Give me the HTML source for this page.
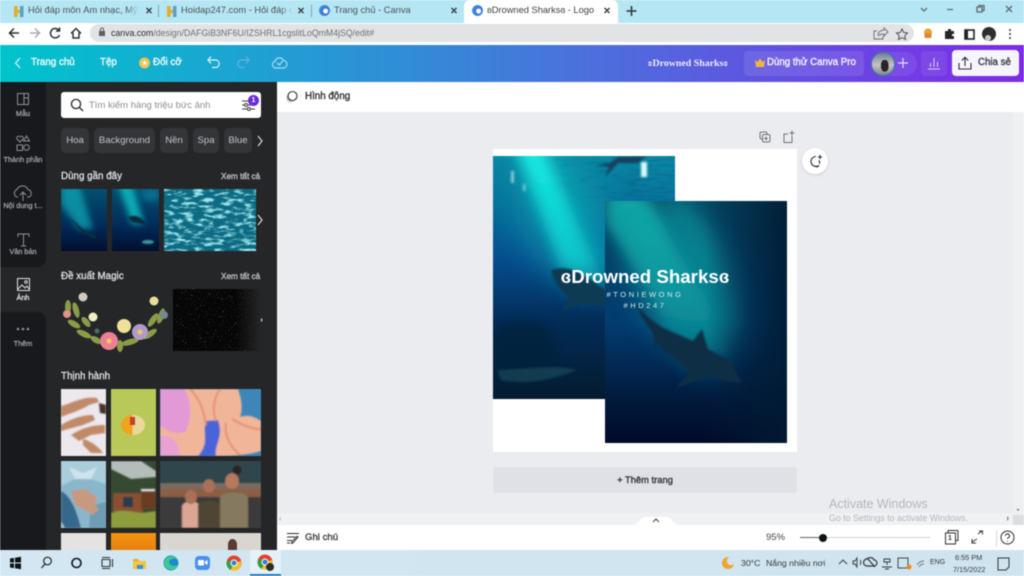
<!DOCTYPE html>
<html><head><meta charset="utf-8"><style>
*{box-sizing:border-box;margin:0;padding:0}
html,body{width:1024px;height:576px;overflow:hidden;background:#fff;font-family:"Liberation Sans","Noto Sans CJK SC",sans-serif}
#r{position:relative;width:1024px;height:576px;overflow:hidden;filter:blur(.4px)}
.a{position:absolute}
.t{position:absolute;white-space:nowrap;line-height:1}
.s{-webkit-text-stroke:.4px currentColor}
svg{position:absolute;overflow:visible}
svg.c{overflow:hidden}
.chip{position:absolute;top:128px;height:25px;background:#333538;border-radius:5px;color:#c4c5c7;font-size:9.600px;line-height:25px;text-align:center}
.rl{position:absolute;left:0;width:46px;text-align:center;font-size:7.300px;color:#a3a4a6;white-space:nowrap;-webkit-text-stroke:.25px currentColor}
</style></head><body><div id="r">
<!-- tab bar -->
<div class="a" style="left:0;top:0;width:1024px;height:23px;background:#b5e6f3"></div>
<div class="a" style="left:464px;top:0;width:154px;height:23px;background:#fff;border-radius:6px 6px 0 0"></div>
<div class="a" style="left:158px;top:5px;width:1px;height:12px;background:#7fa5b0"></div>
<div class="a" style="left:311px;top:5px;width:1px;height:12px;background:#7fa5b0"></div>
<svg style="left:14px;top:6px" width="10" height="11"><path d="M0 0h3.500v4H6v3H3.500v4H0z" fill="#e2ad2c"/><path d="M6 0h3.500v11H6z" fill="#5a9fc4"/></svg>
<svg style="left:167px;top:6px" width="10" height="11"><path d="M0 0h3.500v4H6v3H3.500v4H0z" fill="#e2ad2c"/><path d="M6 0h3.500v11H6z" fill="#5a9fc4"/></svg>
<div class="t" style="left:28px;top:6px;width:111px;overflow:hidden;font-size:9.300px;color:#4b5257">Hỏi đáp môn Âm nhạc, Mỹ thuật</div>
<div class="a" style="left:126px;top:0;width:14px;height:22px;background:linear-gradient(90deg,rgba(181,230,243,0),#b5e6f3 95%)"></div>
<div class="t" style="left:181px;top:6px;width:112px;overflow:hidden;font-size:9.300px;color:#4b5257">Hoidap247.com - Hỏi đáp online</div>
<div class="a" style="left:280px;top:0;width:14px;height:22px;background:linear-gradient(90deg,rgba(181,230,243,0),#b5e6f3 95%)"></div>
<div class="t" style="left:334px;top:6px;font-size:9.300px;color:#4b5257">Trang chủ - Canva</div>
<div class="t" style="left:487px;top:6px;font-size:9.300px;color:#3c4043">ʚDrowned Sharksɞ - Logo</div>
<div class="a" style="left:319px;top:5px;width:11px;height:11px;border-radius:50%;background:radial-gradient(circle at 60% 55%,#fff 0 2px,#3b6fe0 3px,#38b6d8)"></div>
<div class="a" style="left:472px;top:5px;width:11px;height:11px;border-radius:50%;background:radial-gradient(circle at 60% 55%,#fff 0 2px,#3b6fe0 3px,#38b6d8)"></div>
<svg style="left:0;top:0" width="1024" height="23" fill="none" stroke="#2c3034" stroke-width="1.300">
<path d="M146.500 8l5 5m0-5l-5 5M298.500 8l5 5m0-5l-5 5M451.500 8l5 5m0-5l-5 5M604.500 8l5 5m0-5l-5 5"/>
<path d="M631.500 6v10M626.500 11h10" stroke-width="1.500"/>
<path d="M921 8l3 3 3-3M947 9.500h6M977 7h5v5h-5zM979 7V5.500h5v5h-2" stroke="#5d6a70"/><path d="M1006 6l6 6m0-6l-6 6" stroke="#5d6a70"/>
</svg>
<!-- address bar -->
<div class="a" style="left:90px;top:24px;width:824px;height:18px;background:#e1e3e5;border-radius:9px"></div>
<svg style="left:0;top:23px" width="120" height="22" fill="none" stroke-width="1.500">
<path d="M19 10H10M14 5.500L9.500 10l4.500 4.500" stroke="#2c3034"/>
<path d="M30 10h9M35 5.500l4.500 4.500L35 14.500" stroke="#a7abae"/>
<path d="M59 7.500A4.700 4.700 0 1 0 59.500 12M59.500 4.500v3.500H56" stroke="#2c3034"/>
<path d="M71 10.500l5-5 5 5M73 9.500v5.500h6V9.500" stroke="#2c3034"/>
<rect x="99" y="8" width="6" height="5" fill="#5c6064" stroke="none"/><path d="M100.500 8V6.500a1.500 1.500 0 0 1 3 0V8" stroke="#5c6064" stroke-width="1"/>
</svg>
<div class="t" style="left:111px;top:29px;font-size:8.750px;color:#6e7276"><span style="color:#26292c">canva.com</span>/design/DAFGiB3NF6U/IZSHRL1cgslitLoQmM4jSQ/edit#</div>
<svg style="left:870px;top:23px" width="154" height="22" fill="none" stroke="#6b6f73" stroke-width=".9">
<path d="M7 8H4v8h9v-3M8 12c0-3 3-5 6-5V5l4 4-4 4v-2c-2 0-4 0-6 2"/>
<path d="M32 6l1.700 3.500 3.800.5-2.700 2.600.7 3.800L32 14.600l-3.500 1.800.7-3.800-2.700-2.600 3.800-.5z" stroke="#444"/>
<circle cx="58" cy="9.500" r="4" fill="#e9a13b" stroke="none"/><rect x="54.500" y="10.500" width="7" height="4.500" rx="1" fill="#d8892c" stroke="none"/>
<path d="M75 8h3v-2h3v2h3v3h-2v2h2v3H75z" fill="#24272a" stroke="none"/>
<rect x="95" y="7" width="9" height="9" fill="#fff" stroke="#1f2225" stroke-width="1.600"/><rect x="95" y="7" width="3" height="9" fill="#1f2225" stroke="none"/>
<circle cx="119" cy="11" r="7" fill="#2c2d2f" stroke="none"/><circle cx="118" cy="15" r="3" fill="#c9c9c9" stroke="none"/>
<circle cx="140" cy="7" r="1" fill="#333" stroke="none"/><circle cx="140" cy="11" r="1" fill="#333" stroke="none"/><circle cx="140" cy="15" r="1" fill="#333" stroke="none"/>
</svg>
<!-- header -->
<div class="a" style="left:0;top:45px;width:1024px;height:37px;background:linear-gradient(90deg,#00c4cc 0%,#2f8fd6 38%,#4d6fdc 58%,#7d2ae8 100%)"></div>
<svg style="left:0;top:45px" width="300" height="37" fill="none" stroke="#dff6f8" stroke-width="1.200">
<path d="M20 13l-4.500 5 4.500 5"/>
<circle cx="144.500" cy="18" r="5.500" fill="#f2c14e" stroke="none"/><path d="M144.500 15l.9 2 2.100.2-1.600 1.400.5 2-1.900-1.100-1.900 1.100.5-2-1.600-1.400 2.100-.2z" fill="#fff" stroke="none"/>
<path d="M208 15h8a3.800 3.800 0 0 1 0 7.500h-4M211 11.500L208 15l3 3.500"/>
<path d="M249 15h-8a3.800 3.800 0 0 0 0 7.500h4M246 11.500l3 3.500-3 3.500" stroke="#5fb4dc"/>
<path d="M277 23h-1.500a3.300 3.300 0 0 1-.5-6.500 4.500 4.500 0 0 1 8.500-1 3.800 3.800 0 0 1 .5 7.500z" stroke="#a9dcef"/><path d="M277 18l2.500 2 3-4" stroke="#a9dcef"/>
</svg>
<div class="t s" style="left:31px;top:58px;font-size:9.800px;color:#eafafb">Trang chủ</div>
<div class="t s" style="left:100px;top:58px;font-size:9.800px;color:#eafafb">Tệp</div>
<div class="t s" style="left:153px;top:58px;font-size:9.800px;color:#eafafb">Đổi cỡ</div>
<div class="t" style="left:648px;top:59px;font-size:9.900px;font-weight:bold;color:#f0ecfb;font-family:'Liberation Serif',serif">ʚDrowned Sharksɞ</div>
<div class="a" style="left:744px;top:51px;width:120px;height:25px;border-radius:4px;background:rgba(255,255,255,.1)"></div>
<svg style="left:754px;top:58px" width="12" height="10"><path d="M1 2l2.500 2L6 .5 8.500 4 11 2l-1 7H2z" fill="#f3b63c"/></svg>
<div class="t s" style="left:767px;top:58px;font-size:9.700px;color:#f2eefc">Dùng thử Canva Pro</div>
<div class="a" style="left:871px;top:52px;width:46px;height:24px;border-radius:12px;background:rgba(255,255,255,.08)"></div>
<div class="a" style="left:871px;top:52px;width:24px;height:24px;border-radius:50%;border:1.500px solid #3a7e98;background:radial-gradient(ellipse 4px 6px at 58% 58%,#2a2327 0 99%,transparent),linear-gradient(#6f8190,#c8c3c6 55%,#7d8893)"></div>
<svg style="left:897px;top:57px" width="12" height="12" stroke="#e6e0f9" stroke-width="1.200"><path d="M6 1v10M1 6h10"/></svg>
<div class="a" style="left:921px;top:51px;width:26px;height:25px;border-radius:4px;background:rgba(255,255,255,.08)"></div>
<svg style="left:927px;top:56px" width="14" height="14" fill="none" stroke="#dcd4f7"><path d="M1 13h12M3.500 11V7M7 11V2M10.500 11V6"/></svg>
<div class="a" style="left:952px;top:50px;width:67px;height:26px;border-radius:4px;background:#f6f4fd"></div>
<svg style="left:958px;top:56px" width="14" height="14" fill="none" stroke="#2d2f33" stroke-width="1.100"><path d="M1 7v6h12V7M7 10V1.500M3.800 4.500L7 1.300l3.200 3.200"/></svg>
<div class="t s" style="left:978px;top:58px;font-size:9.700px;color:#3c3f44">Chia sẻ</div>
<!-- rail + panel -->
<div class="a" style="left:0;top:82px;width:46px;height:468px;background:#17191c"></div>
<div class="a" style="left:46px;top:82px;width:231px;height:468px;background:#252627"></div>
<div class="a" style="left:0;top:267px;width:46px;height:45px;background:#252627"></div>
<div class="a" style="left:38px;top:259px;width:8px;height:8px;background:#252627"></div><div class="a" style="left:38px;top:259px;width:8px;height:8px;background:#17191c;border-radius:0 0 8px 0"></div>
<div class="a" style="left:38px;top:312px;width:8px;height:8px;background:#252627"></div><div class="a" style="left:38px;top:312px;width:8px;height:8px;background:#17191c;border-radius:0 8px 0 0"></div>
<svg style="left:0;top:85px" width="46" height="270" fill="none" stroke="#8e9092" stroke-width="1">
<path d="M17.500 8.500h11v11h-11zM24 8.500v11M24 13h4.500"/>
<path d="M20 57l-3-3a1.800 1.800 0 0 1 3-2 1.800 1.800 0 0 1 3 2zM26.500 51l3 5h-6zM17 60h5.500v5.500H17z"/><circle cx="26.500" cy="62.500" r="2.800"/>
<path d="M18 112h-1a4 4 0 0 1 0-7.500 6 6 0 0 1 11 0 4 4 0 0 1 1 7.500h-2M23 116v-9M20 110l3-3 3 3"/>
<path d="M18 152v-3h11v3M23.500 149v12M21 161h5"/>
<path d="M17.500 193.500h12v12h-12zM18 204l4-4 3 3 2-2 2 3" stroke="#e2e3e4"/><circle cx="26" cy="197" r="1.300" stroke="#e2e3e4"/>
<circle cx="18" cy="244" r=".8" fill="#8e9092"/><circle cx="23" cy="244" r=".8" fill="#8e9092"/><circle cx="28" cy="244" r=".8" fill="#8e9092"/>
</svg>
<div class="rl" style="top:109px">Mẫu</div>
<div class="rl" style="top:155px">Thành phần</div>
<div class="rl" style="top:201px">Nội dung t...</div>
<div class="rl" style="top:247px">Văn bản</div>
<div class="rl" style="top:293px;color:#e6e6e6">Ảnh</div>
<div class="rl" style="top:339px">Thêm</div>
<!-- search -->
<div class="a" style="left:61px;top:92px;width:200px;height:26px;background:#fff;border-radius:3px"></div>
<svg style="left:70px;top:98px" width="14" height="14" fill="none" stroke="#26282b" stroke-width="1.300"><circle cx="6" cy="6" r="4.600"/><path d="M9.500 9.500L13 13"/></svg>
<div class="t" style="left:89px;top:100.500px;font-size:9.500px;color:#8b8d91">Tìm kiếm hàng triệu bức ảnh</div>
<svg style="left:241px;top:98px" width="14" height="14" fill="none" stroke="#3a3c40"><path d="M1 3h13M1 7h13M1 11h13"/><circle cx="5" cy="7" r="1.500" fill="#fff"/><circle cx="10" cy="3" r="1.500" fill="#fff"/><circle cx="8" cy="11" r="1.500" fill="#fff"/></svg>
<div class="a" style="left:248px;top:95px;width:11px;height:11px;border-radius:50%;background:#6b2bd9;color:#fff;font-size:7px;font-weight:bold;text-align:center;line-height:11px">1</div>
<!-- chips -->
<div class="chip" style="left:61px;width:28px">Hoa</div>
<div class="chip" style="left:94px;width:61px">Background</div>
<div class="chip" style="left:160px;width:28px">Nền</div>
<div class="chip" style="left:193px;width:26px">Spa</div>
<div class="chip" style="left:224px;width:28px">Blue</div>
<svg style="left:0;top:0" width="280" height="340" fill="none" stroke="#d7d8d9" stroke-width="1.200"><path d="M258 136l4 5-4 5M258 215l4 5-4 5M258 315l4 5-4 5"/></svg>
<div class="t s" style="left:61px;top:171.500px;font-size:9.800px;color:#d6d7d8">Dùng gần đây</div>
<div class="t s" style="left:221px;top:173px;font-size:8.200px;color:#b8b9bb">Xem tất cả</div>
<div class="t s" style="left:61px;top:271.500px;font-size:9.800px;color:#d6d7d8">Đề xuất Magic</div>
<div class="t s" style="left:221px;top:273px;font-size:8.200px;color:#b8b9bb">Xem tất cả</div>
<div class="t s" style="left:61px;top:371.500px;font-size:9.800px;color:#d6d7d8">Thịnh hành</div>
<!-- recent thumbs -->
<svg class="c" style="left:61px;top:189px" width="46" height="62"><defs><filter id="b3" x="-50%" y="-50%" width="200%" height="200%"><feGaussianBlur stdDeviation="3.500"/></filter><linearGradient id="tg" x1="0" y1="0" x2="0" y2="1"><stop offset="0" stop-color="#045070"/><stop offset=".6" stop-color="#032a58"/><stop offset="1" stop-color="#010f2e"/></linearGradient><filter id="b4" x="-30%" y="-30%" width="160%" height="160%"><feGaussianBlur stdDeviation=".7"/></filter></defs><rect width="46" height="62" fill="url(#tg)"/><path d="M0 -5h18l14 45H18L0 15z" fill="#0aa0b0" opacity=".8" filter="url(#b3)"/><path d="M8 28l16 14 12 5-2 3-12-6z" fill="#0b2a3f" filter="url(#b4)"/></svg>
<svg class="c" style="left:112px;top:189px" width="47" height="62"><rect width="47" height="62" fill="url(#tg)"/><path d="M6 -5h14l12 40H20z" fill="#0cc0c6" opacity=".85" filter="url(#b3)"/><path d="M28 0h19v12H32z" fill="#0a7fa0" opacity=".7" filter="url(#b3)"/><path d="M16 28c8-3 14 0 19 8l-6-1-9-2z" fill="#0c2c3f" filter="url(#b4)"/><ellipse cx="36" cy="53" rx="6" ry="2" fill="#3d9aa0" filter="url(#b4)"/></svg>
<svg class="c" style="left:164px;top:189px" width="92" height="62"><defs><filter id="w" x="0" y="0" width="100%" height="100%" color-interpolation-filters="sRGB"><feTurbulence type="fractalNoise" baseFrequency=".1 .3" numOctaves="3" seed="4"/><feColorMatrix values="0 0 0 0 .62  0 0 0 0 .9  0 0 0 0 .93  4 0 0 0 -1.900"/></filter></defs><rect width="92" height="62" fill="#0c6a82"/><rect width="92" height="62" filter="url(#w)"/></svg>
<!-- magic -->
<svg style="left:60px;top:290px" width="112" height="62">
<g fill="#8b9b48"><ellipse cx="8" cy="17" rx="3" ry="7"/><ellipse cx="16" cy="20" rx="3" ry="8" transform="rotate(-15 16 20)"/><ellipse cx="14" cy="34" rx="7" ry="3" transform="rotate(30 14 34)"/><ellipse cx="24" cy="44" rx="8" ry="3" transform="rotate(25 24 44)"/><ellipse cx="36" cy="50" rx="6" ry="3" transform="rotate(30 36 50)"/><ellipse cx="26" cy="32" rx="6" ry="3" transform="rotate(50 26 32)"/><ellipse cx="101" cy="26" rx="3" ry="8" transform="rotate(20 101 26)"/><ellipse cx="93" cy="30" rx="3" ry="8" transform="rotate(35 93 30)"/><ellipse cx="90" cy="44" rx="8" ry="3" transform="rotate(-35 90 44)"/><ellipse cx="70" cy="52" rx="9" ry="3" transform="rotate(-15 70 52)"/><ellipse cx="60" cy="56" rx="3" ry="6"/></g>
<circle cx="23" cy="7" r="4.500" fill="#cfcabb"/><circle cx="7" cy="24" r="4" fill="#dd9385"/><circle cx="33" cy="27" r="4.500" fill="#f2eec4"/><circle cx="94" cy="11" r="4.500" fill="#e8df98"/><circle cx="104" cy="25" r="4" fill="#74888f"/><circle cx="64" cy="36" r="7" fill="#eee19a"/><circle cx="80" cy="42" r="8" fill="#b09acb"/><circle cx="49" cy="51" r="9" fill="#ec7e96"/><circle cx="49" cy="51" r="2.500" fill="#f4c95a"/><circle cx="80" cy="42" r="2.500" fill="#e7cc57"/><circle cx="37" cy="41" r="2.500" fill="#4e6a6a"/>
</svg>
<svg class="c" style="left:173px;top:289px" width="88" height="62"><defs><filter id="st" x="0" y="0" width="100%" height="100%" color-interpolation-filters="sRGB"><feTurbulence type="fractalNoise" baseFrequency=".8" numOctaves="1" seed="7"/><feColorMatrix values="0 0 0 0 .8  0 0 0 0 .8  0 0 0 0 .8  9 0 0 0 -6"/></filter><linearGradient id="fd"><stop offset=".72" stop-color="#252627" stop-opacity="0"/><stop offset="1" stop-color="#252627"/></linearGradient></defs><rect width="88" height="62" fill="#060606"/><rect width="88" height="62" filter="url(#st)" opacity=".6"/><rect width="88" height="62" fill="url(#fd)"/></svg>
<!-- trending -->
<svg class="c" style="left:61px;top:389px" width="45" height="67"><rect width="45" height="67" fill="#ece8ee"/><g fill="#c08a68" filter="url(#b4)"><path d="M0 17c12-3 22-10 36-8l2 4-10 3c-10 6-18 8-28 12z"/><path d="M0 36c10-6 20-10 32-10l2 5-12 5-22 6z"/><path d="M10 46c8-5 18-10 34-10v8l-14 2-12 6z"/><path d="M22 50c8 2 16 8 20 14H30l-8-8z"/><path d="M38 14l7 2v9l-6-1z" fill="#44302a"/></g></svg>
<div class="a" style="left:111px;top:389px;width:45px;height:67px;background:#b9c959"></div>
<div class="a" style="left:121px;top:415px;width:24px;height:20px;border-radius:50%;background:linear-gradient(90deg,#f0a31f 45%,#e8d89a 50%)"></div>
<div class="a" style="left:130px;top:417px;width:5px;height:8px;background:#c73f2a"></div>
<svg class="c" style="left:160px;top:389px" width="101" height="67"><rect width="101" height="67" fill="#3e86b8"/><g filter="url(#b4)"><path d="M0 0h78c5 14 4 22 2 28 8-3 15 0 21 4v30c-20 6-40 5-70 5H0z" fill="#f1b69a"/><path d="M0 0h24c8 12 8 28 2 42-8 5-20 0-26-6z" fill="#e29ad6"/><path d="M0 48c10-4 18 2 20 19H0z" fill="#e9a2cf"/><path d="M46 32c-4 12 4 22-8 35h18c-2-12 8-18 2-36z" fill="#4a63d8"/><path d="M30 0c10 10 14 22 16 36M60 0c-6 8-8 22-4 32M72 30c10 6 20 10 29 10M66 34c-2 12 4 24 14 32" stroke="#e7906f" fill="none" stroke-width="2"/></g></svg>
<svg class="c" style="left:61px;top:461px" width="45" height="67"><rect width="45" height="67" fill="#a9cddb"/><g filter="url(#b4)"><path d="M0 25l20-10 25 8v44H10z" fill="#8ab6cc"/><path d="M0 30c8 4 14 14 20 37H4L0 60z" fill="#35688a"/><path d="M30 45l15-4v26H28z" fill="#6d9cb5"/><path d="M10 30l14-2 12 8-2 8 4 4-6 6-18-10z" fill="#c79a80"/><path d="M8 6l14 6 14-6-6 12H14z" fill="#cfe3ec"/></g></svg>
<svg class="c" style="left:111px;top:461px" width="45" height="67"><rect width="45" height="67" fill="#354a30"/><g filter="url(#b4)"><path d="M0 0h30L45 10v6L20 18 0 8z" fill="#b4bdb9"/><rect x="2" y="32" width="30" height="20" fill="#8a4f32"/><rect x="12" y="36" width="10" height="10" fill="#2a3a48"/><path d="M30 30h15v18H30z" fill="#6a3e22"/><path d="M0 52c10-4 20-2 30 0l15-2v17H0z" fill="#8d9c3e"/><path d="M30 28h14v2H30z" fill="#eee"/></g></svg>
<svg class="c" style="left:160px;top:461px" width="101" height="67"><rect width="101" height="67" fill="#2f464c"/><g filter="url(#b4)"><rect y="22" width="101" height="8" fill="#7d6a5e"/><rect y="28" width="101" height="10" fill="#8a5f45"/><rect y="36" width="101" height="31" fill="#3b3a3a"/><path d="M22 67V45c2-6 16-6 18 0v22z" fill="#dba693"/><path d="M38 67V44c2-6 20-6 22 0v23z" fill="#4f4436"/><path d="M60 67V36c4-6 24-6 28 0v31z" fill="#85795f"/><ellipse cx="31" cy="36" rx="6" ry="7" fill="#a96f55"/><ellipse cx="49" cy="25" rx="6" ry="7" fill="#a96f55"/><ellipse cx="72" cy="20" rx="7" ry="8" fill="#b5795c"/><circle cx="77" cy="9" r="4.500" fill="#2b2322"/></g></svg>
<div class="a" style="left:61px;top:533px;width:45px;height:17px;background:#e4e3e2"></div>
<div class="a" style="left:111px;top:533px;width:45px;height:17px;background:linear-gradient(#f4940f,#e97f12)"></div>
<div class="a" style="left:160px;top:533px;width:101px;height:17px;background:#d9d6d2"></div>
<div class="a" style="left:228px;top:539px;width:9px;height:11px;background:#5a3a35;border-radius:50% 50% 0 0"></div>
<!-- panel collapse -->
<svg style="left:276px;top:290px" width="10" height="56"><path d="M0 0c0 8 8 8 8 14v28c0 6-8 6-8 14z" fill="#252627"/><path d="M4.500 25.500l-2 2.500 2 2.500" stroke="#ccc" fill="none"/></svg>
<!-- top toolbar -->
<div class="a" style="left:277px;top:82px;width:747px;height:30px;background:#fff"></div>
<svg style="left:285px;top:89px" width="16" height="16" fill="none"><circle cx="5.500" cy="9" r="4.200" fill="#bdbec0"/><circle cx="7.500" cy="7" r="4.500" fill="#fff" stroke="#2f3134" stroke-width="1.100"/></svg>
<div class="t s" style="left:305px;top:92px;font-size:9.800px;color:#36383b">Hình động</div>
<!-- canvas -->
<div class="a" style="left:277px;top:112px;width:747px;height:401px;background:#ebecf0"></div>
<svg style="left:758px;top:130px" width="36" height="14" fill="none" stroke="#6f7277"><rect x="2" y="2" width="7" height="7" rx="1.500"/><rect x="4.500" y="4.500" width="7.500" height="7.500" rx="1.500" fill="#ebecf0"/><path d="M8 6.500v4M6 8.500h4"/><path d="M34 6v6.500h-8V4H30M34 .5v5M31.500 3H36.500"/></svg>
<div class="a" style="left:493px;top:149px;width:304px;height:303px;background:#fff"></div>
<div class="a" style="left:802px;top:148px;width:26px;height:26px;border-radius:50%;background:#fff;box-shadow:0 1px 3px rgba(0,0,0,.12)"></div>
<svg style="left:808px;top:154px" width="15" height="15" fill="none" stroke="#27292c" stroke-width="1.100"><path d="M8 2.500a5 5 0 1 0 3 9l-2 1.500-2-1"/><path d="M11 6.200a5 5 0 0 1 .5 3.500M12 1v4M10 3h4"/></svg>
<!-- design img 1 -->
<svg class="c" style="left:493px;top:156px" width="182" height="243"><defs>
<linearGradient id="b1" x1="0" y1="0" x2="0" y2="1"><stop offset="0" stop-color="#0a88a4"/><stop offset=".2" stop-color="#07709a"/><stop offset=".42" stop-color="#064e8e"/><stop offset=".68" stop-color="#032c58"/><stop offset="1" stop-color="#031b2e"/></linearGradient>
<linearGradient id="r1" gradientUnits="userSpaceOnUse" x1="0" y1="0" x2="0" y2="150"><stop offset="0" stop-color="#14eae2"/><stop offset=".7" stop-color="#0cc6ca" stop-opacity=".95"/><stop offset="1" stop-color="#0c8a9a" stop-opacity="0"/></linearGradient>
<filter id="bl" x="-40%" y="-40%" width="180%" height="180%"><feGaussianBlur stdDeviation="7"/></filter><filter id="bl2" x="-30%" y="-30%" width="160%" height="160%"><feGaussianBlur stdDeviation="1"/></filter><filter id="bl3" x="-30%" y="-30%" width="160%" height="160%"><feGaussianBlur stdDeviation="4"/></filter><filter id="bl5" x="-50%" y="-50%" width="200%" height="200%"><feGaussianBlur stdDeviation="14"/></filter>
<filter id="rp" x="0" y="0" width="100%" height="100%" color-interpolation-filters="sRGB"><feTurbulence type="fractalNoise" baseFrequency=".06 .35" numOctaves="2" seed="3"/><feColorMatrix values="0 0 0 0 .05  0 0 0 0 .22  0 0 0 0 .32  2 0 0 0 -.9"/></filter></defs>
<rect width="182" height="243" fill="url(#b1)"/>
<rect x="60" y="0" width="122" height="46" filter="url(#rp)" opacity=".3"/>
<ellipse cx="72" cy="62" rx="48" ry="72" transform="rotate(-25 72 62)" fill="#0aa0b0" opacity=".5" filter="url(#bl5)"/>
<g filter="url(#bl)"><path d="M20 -15h28l74 165H82z" fill="url(#r1)"/><path d="M58 -10h14l56 135h-16z" fill="#0fb4b8" opacity=".3"/></g>
<path d="M104 9l13-2 8-6h28l-8 6h-20l-13 14 4-10z" fill="#12405c" filter="url(#bl2)"/>
<g fill="#d8fbfb" filter="url(#bl2)"><rect x="148" y="6" width="6" height="15"/><rect x="18" y="15" width="3" height="12" opacity=".6"/><rect x="30" y="28" width="2.500" height="7" opacity=".5"/></g>
<path d="M58 114c14-4 24-1 40 10l14 10v17l-22-4-22 8 8-12c-8-8-16-18-18-29z" fill="#0f3a52" filter="url(#bl2)"/>
<ellipse cx="28" cy="190" rx="34" ry="26" fill="#04243a" filter="url(#bl3)" opacity=".7"/><path d="M4 214c30-1 58-6 80 0-20 8-46 16-76 10z" fill="#1e505f" opacity=".6" filter="url(#bl2)"/>
</svg>
<!-- design img 2 -->
<svg class="c" style="left:605px;top:201px" width="182" height="242"><defs>
<linearGradient id="b2" x1="0" y1="0" x2="0" y2="1"><stop offset="0" stop-color="#054460"/><stop offset=".5" stop-color="#033c70"/><stop offset=".8" stop-color="#021c40"/><stop offset="1" stop-color="#010a28"/></linearGradient>
<linearGradient id="s2" x1="0" y1="0" x2="1" y2="0"><stop offset=".55" stop-color="#011b33" stop-opacity="0"/><stop offset="1" stop-color="#011b33" stop-opacity=".9"/></linearGradient>
<linearGradient id="r2" gradientUnits="userSpaceOnUse" x1="0" y1="0" x2="0" y2="190"><stop offset="0" stop-color="#14b4b0"/><stop offset=".55" stop-color="#0a9aa0" stop-opacity=".9"/><stop offset="1" stop-color="#0a7080" stop-opacity="0"/></linearGradient></defs>
<rect width="182" height="242" fill="url(#b2)"/>
<ellipse cx="80" cy="78" rx="50" ry="85" transform="rotate(-25 80 78)" fill="#0c9aa0" opacity=".6" filter="url(#bl5)"/>
<g filter="url(#bl)"><path d="M0 -10h38l70 120 25 80H90L45 90 0 22z" fill="url(#r2)" opacity=".85"/><path d="M60 -5h25l50 130h-25z" fill="#0d9aa0" opacity=".3"/></g>
<rect width="182" height="242" fill="url(#s2)"/>
<path d="M30 103L45 118 58 127 72 133 88 140 97 128 103 148 125 160 137 182 120 180 104 176 85 182 70 187 84 172 70 158 58 150 53 142 50 150 48 133 38 118z" fill="#0e2f45" filter="url(#bl2)"/>
</svg>
<div class="t" style="left:493px;width:304px;text-align:center;top:267.500px;font-size:18.700px;font-weight:bold;color:#fff">ɞDrowned Sharksɞ</div>
<div class="t" style="left:493px;width:304px;text-align:center;top:291px;font-size:7.500px;letter-spacing:2.600px;color:#d8e8ee">#TONIEWONG</div>
<div class="t" style="left:493px;width:304px;text-align:center;top:301.500px;font-size:7.500px;letter-spacing:2.600px;color:#d8e8ee">#HD247</div>
<!-- add page -->
<div class="a s" style="left:493px;top:467px;width:304px;height:26px;background:#dfe1e6;border-radius:3px;text-align:center;font-size:9.400px;line-height:26px;color:#3a3c40">+ Thêm trang</div>
<!-- scroll strip -->
<div class="a" style="left:277px;top:513px;width:747px;height:12px;background:#f0f1f3"></div>
<div class="a" style="left:1013px;top:112px;width:11px;height:413px;background:#eef0f2"></div>
<svg style="left:1000px;top:495px" width="24" height="30"><path d="M16 14l2 2 2-2" fill="#888"/><path d="M7 21v5l2-2.500z" fill="#888"/><rect x="13" y="20" width="11" height="10" fill="#dcdde0"/></svg>
<div class="t" style="left:279px;top:516px;font-size:7px;color:#888">‹</div>
<!-- activate -->
<div class="t" style="left:829px;top:498px;font-size:12.500px;color:#b4b7bc">Activate Windows</div>
<div class="t" style="left:829px;top:514px;font-size:8.800px;color:#b4b7bc">Go to Settings to activate Windows.</div>
<!-- bottom bar -->
<div class="a" style="left:277px;top:525px;width:747px;height:25px;background:#fff"></div>
<svg style="left:628px;top:515px" width="56" height="12"><path d="M0 12c12-1 10-10 18-10h20c8 0 6 9 18 10z" fill="#fff"/><path d="M25 7l3-3 3 3" fill="none" stroke="#444"/></svg>
<svg style="left:286px;top:532px" width="14" height="12" fill="none" stroke="#2f3134"><path d="M1 1.500h12M1 5h8M1 8.500h5M1 11h3M12 5l-5 6-1.500.5.300-1.700 5-5.500z"/></svg>
<div class="t s" style="left:305px;top:533px;font-size:9.600px;color:#43464a">Ghi chú</div>
<div class="t" style="left:766px;top:533px;font-size:9.500px;color:#44474b">95%</div>
<div class="a" style="left:800px;top:537px;width:130px;height:1px;background:#d0d2d6"></div>
<div class="a" style="left:800px;top:537px;width:22px;height:1px;background:#60636a"></div>
<div class="a" style="left:819px;top:534px;width:8px;height:8px;border-radius:50%;background:#0e1318"></div>
<svg style="left:944px;top:529px" width="76" height="18" fill="none" stroke="#2f3134"><rect x="1.500" y="4" width="10" height="11"/><path d="M4 4V1.500h10v10h-2.500"/><path d="M34 5l4-3M35 2h3.500v3.500M28 13l5-3M28 10v4h4" stroke-width="1"/><path d="M52.500 1v17" stroke="#d7d8da"/><circle cx="63.500" cy="8.500" r="6.500"/><path d="M61.500 6.800a2 2 0 1 1 2.500 2c-.5.300-.5.800-.5 1.200M63.500 12v.8"/></svg>
<div class="t" style="left:948px;top:535px;font-size:7px;font-weight:bold;color:#333">1</div>
<!-- taskbar -->
<div class="a" style="left:0;top:550px;width:1024px;height:26px;background:linear-gradient(90deg,#d2e7f1,#cfe4ef)"></div>
<div class="a" style="left:250px;top:550px;width:31px;height:26px;background:#e4f1f7;border-bottom:2px solid #1f7ac9"></div>
<svg style="left:0;top:550px" width="290" height="26" fill="none">
<path d="M10 8.500l4-.6v4.600h-4zM15 7.700l6-.9v5.700h-6zM10 13.500h4v4.600l-4-.6zM15 13.500h6v5.700l-6-.9z" fill="#0f1115"/>
<circle cx="47.500" cy="11" r="3.800" stroke="#22262a" stroke-width="1.200"/><path d="M45 14l-3.500 4" stroke="#22262a" stroke-width="1.300"/>
<circle cx="76.500" cy="13" r="4.500" stroke="#15181b" stroke-width="1.600"/>
<path d="M102 9.500h8v7h-8zM102 7.500h8M102 18.500h8M112.500 9v8" stroke="#33373b" stroke-width="1.100"/>
<path d="M133 9h5l2 2h6v8h-13z" fill="#f3c343"/><path d="M133 9h5v2h-5z" fill="#e5a823"/><rect x="137" y="15" width="6" height="4" fill="#3a8fd0"/>
<circle cx="171" cy="13" r="7.500" fill="#1b8bd0"/><path d="M164 13a7.500 7.500 0 0 1 14-3c-2-2-8-2-9 2 0 3 4 5 9 3a7 7 0 0 1-3 4c-5 2-11-1-11-6z" fill="#3fc98f"/>
<rect x="195" y="6" width="15" height="14" rx="4" fill="#4a90ef"/><rect x="198" y="10" width="6" height="5.500" rx="1" fill="#fff"/><path d="M205 11.500l2.500-1.500v5l-2.500-1.500z" fill="#fff"/>
<circle cx="234" cy="13" r="7.500" fill="#e2432f"/><path d="M234 13l-3.500 7a7.500 7.500 0 0 1-3-10z" fill="#2f9e48"/><path d="M234 13l7-2a7.500 7.500 0 0 1-7 9.500l-3.500-.5z" fill="#f3c11e"/><circle cx="234" cy="13" r="3" fill="#2e7ee0" stroke="#fff"/>
<circle cx="265" cy="12" r="7.500" fill="#e2432f"/><path d="M265 12l-3.500 7a7.500 7.500 0 0 1-3-10z" fill="#2f9e48"/><path d="M265 12l7-2a7.500 7.500 0 0 1-7 9.500l-3.500-.5z" fill="#f3c11e"/><circle cx="265" cy="12" r="3" fill="#2e7ee0" stroke="#fff"/><circle cx="270" cy="17" r="4" fill="#2b2b2d"/>
</svg>
<svg style="left:720px;top:552px" width="304" height="24" fill="none" stroke="#33373b" stroke-width=".9">
<circle cx="8" cy="11" r="6" fill="#f0a32d" stroke="none"/><circle cx="11" cy="9" r="4.200" fill="#d0e4ef" stroke="none"/>
<path d="M119 12l4-4 4 4M133 9v3h2l2 3V6l-2 3zM140 8c1 1 1 4 0 5"/>
<path d="M147 14a3.500 3.500 0 0 1 0-7c2-2 6-2 7 1a3 3 0 0 1 0 6zM147 6l8 9" stroke-width="1.200"/>
<path d="M164 7h6v3h-6zM162 15h10M167 10v3M165 17h4"/><rect x="178" y="6" width="10" height="10"/><circle cx="189" cy="15" r="2.500" fill="#e98a1d" stroke="none"/>
<path d="M197 13c2-3 5-4 7-4M199 15c1-2 3-3 5-3" stroke="#777"/>
<path d="M278 6h11v9l-3 3h-8z" stroke-width="1"/>
</svg>
<div class="t" style="left:741px;top:559px;font-size:8.700px;color:#35393d">30°C</div>
<div class="t" style="left:766px;top:559px;font-size:8.700px;color:#35393d">Nắng nhiều nơi</div>
<div class="t" style="left:930px;top:559px;font-size:7px;color:#35393d">ENG</div>
<div class="t" style="left:955px;top:553.500px;font-size:7.300px;color:#35393d">6:55 PM</div>
<div class="t" style="left:953px;top:565.500px;font-size:7.300px;color:#35393d">7/15/2022</div>
</div></body></html>
